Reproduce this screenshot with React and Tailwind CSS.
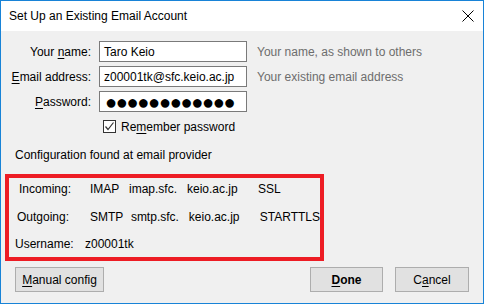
const Key = ({ children }) => (
  <span className="underline decoration-1 underline-offset-[2px]">{children}</span>
);

const Field = ({ label, children, hint }) => (
  <>
    <div className="h-[21px] flex items-center justify-end">{label}</div>
    <div className="h-[21px] border border-[#7a7a7a] bg-white px-[4px] flex items-center overflow-hidden whitespace-nowrap">
      {children}
    </div>
    <div className="h-[21px] flex items-center pl-[2px] text-[#6d6d6d] whitespace-nowrap">{hint}</div>
  </>
);

const Button = ({ children, className }) => (
  <button
    className={
      "h-[25px] border border-[#adadad] bg-[#e1e1e1] flex items-center justify-center text-black " +
      (className || "")
    }
  >
    {children}
  </button>
);

export default function App() {
  return (
    <div
      className="w-[484px] h-[304px] border border-[#1883d7] flex flex-col text-[12px] text-black leading-[16px]"
      style={{ fontFamily: '"Liberation Sans", Arial, sans-serif' }}
    >
      <div className="h-[30px] bg-white flex items-center justify-between pl-[8px] pr-[9px] shrink-0">
        <span className="text-[12px]">Set Up an Existing Email Account</span>
        <svg width="12" height="12" viewBox="0 0 12 12">
          <path d="M0.5 0.5 L11.5 11.5 M11.5 0.5 L0.5 11.5" stroke="#000" strokeWidth="1" fill="none" />
        </svg>
      </div>

      <div className="flex-1 bg-[#f0f0f0] flex flex-col">
        <div className="mt-[10px] grid grid-cols-[90px_148px_1fr] gap-x-[8px] gap-y-[4px]">
          <Field label={<span>Your <Key>n</Key>ame:</span>} hint="Your name, as shown to others">
            Taro Keio
          </Field>
          <Field label={<span><Key>E</Key>mail address:</span>} hint="Your existing email address">
            z00001tk@sfc.keio.ac.jp
          </Field>
          <Field label={<span><Key>P</Key>assword:</span>} hint="">
            <span className="text-[20px] leading-[18px] tracking-[-1.3px] pl-[1px]">●●●●●●●●●●●●</span>
          </Field>
        </div>

        <div className="mt-[8px] ml-[102px] flex items-center gap-[5px] h-[13px]">
          <div className="w-[13px] h-[13px] border border-[#333] bg-white flex items-center justify-center">
            <svg width="11" height="11" viewBox="0 0 11 11">
              <polyline points="1.5,5.5 4,8.5 9.5,1.5" fill="none" stroke="#333" strokeWidth="1.2" />
            </svg>
          </div>
          <span>
            Re<Key>m</Key>ember password
          </span>
        </div>

        <div className="mt-[14px] ml-[14px] h-[16px]">Configuration found at email provider</div>

        <div className="mt-[11px] ml-[4px] w-[319px] h-[87px] border-4 border-[#ed1c24] flex flex-col pt-[3px] whitespace-nowrap">
          <div className="h-[16px] flex pl-[10px]">
            <span className="w-[71px]">Incoming:</span>
            <span className="w-[39px]">IMAP</span>
            <span className="w-[58px]">imap.sfc.</span>
            <span className="w-[71px]">keio.ac.jp</span>
            <span>SSL</span>
          </div>
          <div className="mt-[12px] h-[16px] flex pl-[8px]">
            <span className="w-[73px]">Outgoing:</span>
            <span className="w-[41px]">SMTP</span>
            <span className="w-[58px]">smtp.sfc.</span>
            <span className="w-[71px]">keio.ac.jp</span>
            <span>STARTTLS</span>
          </div>
          <div className="mt-[11px] h-[16px] flex pl-[6px]">
            <span className="w-[70px]">Username:</span>
            <span>z00001tk</span>
          </div>
        </div>

        <div className="mt-[6px] flex items-center px-[14px]">
          <Button className="w-[89px]">
            <span><Key>M</Key>anual config</span>
          </Button>
          <div className="flex-1" />
          <Button className="w-[73px] font-bold">
            <span><Key>D</Key>one</span>
          </Button>
          <Button className="w-[74px] ml-[12px]">
            <span>C<Key>a</Key>ncel</span>
          </Button>
        </div>
      </div>
    </div>
  );
}
